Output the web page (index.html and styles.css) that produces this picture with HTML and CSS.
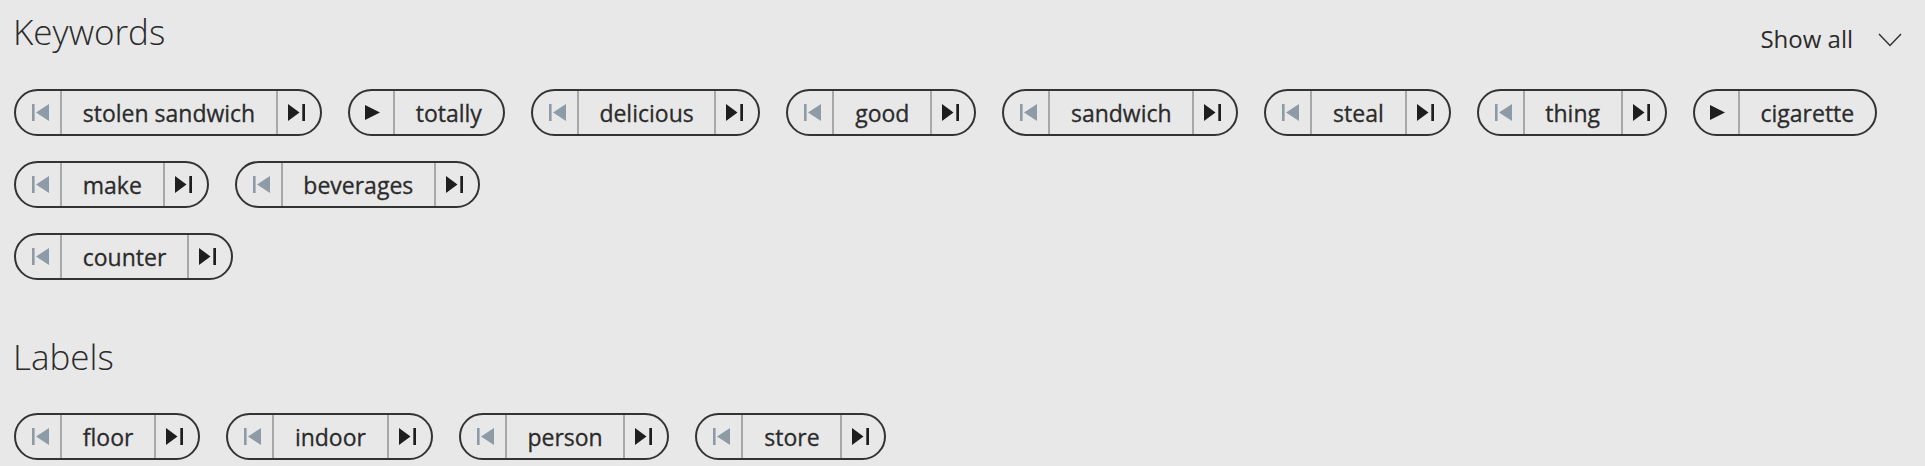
FILE: index.html
```html
<!DOCTYPE html>
<html lang="en">
<head>
<meta charset="utf-8">
<title>Keywords and Labels</title>
<link rel="stylesheet" href="styles.css">
</head>
<body>
<svg width="0" height="0" class="defs" aria-hidden="true">
  <defs>
    <symbol id="i-start" viewBox="0 0 17 17"><rect x="0" y="0" width="2.6" height="17"/><polygon points="17,0 4,8.5 17,17"/></symbol>
    <symbol id="i-end" viewBox="0 0 17 17"><polygon points="0,0 11.5,8.5 0,17"/><rect x="14.3" y="0" width="2.7" height="17"/></symbol>
    <symbol id="i-play" viewBox="0 0 15 15"><polygon points="0,0 15,7.5 0,15"/></symbol>
  </defs>
</svg>

<section class="section section-keywords">
  <header class="section-head">
    <h2 class="section-title">Keywords</h2>
    <button class="show-all" type="button">Show all
      <svg class="chev" width="24" height="14" viewBox="0 0 24 14"><polyline points="1,1 12,12.5 23,1" fill="none" stroke="#333" stroke-width="1.5"/></svg>
    </button>
  </header>
  <div class="chip-rows">
    <div class="chip-row">
      <div class="chip"><span class="btn btn-start"><svg class="ic"><use href="#i-start"/></svg></span><span class="chip-label">stolen sandwich</span><span class="btn btn-end"><svg class="ic"><use href="#i-end"/></svg></span></div>
      <div class="chip"><span class="btn btn-play"><svg class="ic-play"><use href="#i-play"/></svg></span><span class="chip-label">totally</span></div>
      <div class="chip"><span class="btn btn-start"><svg class="ic"><use href="#i-start"/></svg></span><span class="chip-label">delicious</span><span class="btn btn-end"><svg class="ic"><use href="#i-end"/></svg></span></div>
      <div class="chip"><span class="btn btn-start"><svg class="ic"><use href="#i-start"/></svg></span><span class="chip-label">good</span><span class="btn btn-end"><svg class="ic"><use href="#i-end"/></svg></span></div>
      <div class="chip"><span class="btn btn-start"><svg class="ic"><use href="#i-start"/></svg></span><span class="chip-label">sandwich</span><span class="btn btn-end"><svg class="ic"><use href="#i-end"/></svg></span></div>
      <div class="chip"><span class="btn btn-start"><svg class="ic"><use href="#i-start"/></svg></span><span class="chip-label">steal</span><span class="btn btn-end"><svg class="ic"><use href="#i-end"/></svg></span></div>
      <div class="chip"><span class="btn btn-start"><svg class="ic"><use href="#i-start"/></svg></span><span class="chip-label">thing</span><span class="btn btn-end"><svg class="ic"><use href="#i-end"/></svg></span></div>
      <div class="chip"><span class="btn btn-play"><svg class="ic-play"><use href="#i-play"/></svg></span><span class="chip-label">cigarette</span></div>
    </div>
    <div class="chip-row">
      <div class="chip"><span class="btn btn-start"><svg class="ic"><use href="#i-start"/></svg></span><span class="chip-label">make</span><span class="btn btn-end"><svg class="ic"><use href="#i-end"/></svg></span></div>
      <div class="chip"><span class="btn btn-start"><svg class="ic"><use href="#i-start"/></svg></span><span class="chip-label">beverages</span><span class="btn btn-end"><svg class="ic"><use href="#i-end"/></svg></span></div>
    </div>
    <div class="chip-row">
      <div class="chip"><span class="btn btn-start"><svg class="ic"><use href="#i-start"/></svg></span><span class="chip-label">counter</span><span class="btn btn-end"><svg class="ic"><use href="#i-end"/></svg></span></div>
    </div>
  </div>
</section>

<section class="section section-labels">
  <header class="section-head">
    <h2 class="section-title">Labels</h2>
  </header>
  <div class="chip-rows">
    <div class="chip-row">
      <div class="chip"><span class="btn btn-start"><svg class="ic"><use href="#i-start"/></svg></span><span class="chip-label">floor</span><span class="btn btn-end"><svg class="ic"><use href="#i-end"/></svg></span></div>
      <div class="chip"><span class="btn btn-start"><svg class="ic"><use href="#i-start"/></svg></span><span class="chip-label">indoor</span><span class="btn btn-end"><svg class="ic"><use href="#i-end"/></svg></span></div>
      <div class="chip"><span class="btn btn-start"><svg class="ic"><use href="#i-start"/></svg></span><span class="chip-label">person</span><span class="btn btn-end"><svg class="ic"><use href="#i-end"/></svg></span></div>
      <div class="chip"><span class="btn btn-start"><svg class="ic"><use href="#i-start"/></svg></span><span class="chip-label">store</span><span class="btn btn-end"><svg class="ic"><use href="#i-end"/></svg></span></div>
    </div>
  </div>
</section>
</body>
</html>
```

FILE: styles.css
```css
html, body {
  margin: 0;
  padding: 0;
}
body {
  background: #e8e8e8;
  color: #2b2b2b;
  font-family: "Open Sans", "Noto Sans", "Liberation Sans", sans-serif;
  padding: 10px 23px 0 14px;
  width: 1925px;
  box-sizing: border-box;
}
.defs {
  position: absolute;
  width: 0;
  height: 0;
  overflow: hidden;
}
.section-keywords {
  margin-bottom: 55px;
}
.section-head {
  display: flex;
  justify-content: space-between;
  align-items: flex-start;
  margin-bottom: 34px;
}
.section-title {
  margin: 0;
  font-size: 35px;
  font-weight: 350;
  line-height: 44px;
  color: #2b2b2b;
  margin-left: -1px;
}
.show-all {
  display: flex;
  align-items: center;
  gap: 25px;
  margin-top: 13px;
  padding: 0;
  border: 0;
  background: none;
  font-family: inherit;
  font-size: 24px;
  line-height: 32px;
  color: #2b2b2b;
}
.chev {
  display: block;
  margin-top: 2px;
}
.chip-rows {
  display: flex;
  flex-direction: column;
  gap: 25px;
}
.chip-row {
  display: flex;
  gap: 26px;
}
.chip {
  display: flex;
  align-items: stretch;
  height: 47px;
  box-sizing: border-box;
  border: 2px solid #333;
  border-radius: 24px;
  overflow: hidden;
}
.btn {
  display: flex;
  align-items: center;
}
.btn-start {
  padding: 0 11px 0 16px;
  border-right: 2px solid #a8a8a8;
  color: #8c9ba6;
}
.btn-end {
  padding: 0 15px 0 10px;
  border-left: 2px solid #a8a8a8;
  color: #1e1e1e;
}
.btn-play {
  padding: 0 13px 0 15px;
  border-right: 2px solid #a8a8a8;
  color: #1e1e1e;
}
.ic {
  width: 17px;
  height: 17px;
  fill: currentColor;
  display: block;
}
.ic-play {
  width: 15px;
  height: 15px;
  fill: currentColor;
  display: block;
}
.chip-label {
  display: flex;
  align-items: center;
  padding: 0 20.75px;
  font-size: 23px;
  font-weight: 500;
  -webkit-text-stroke: 0.3px #2b2b2b;
  color: #2b2b2b;
  white-space: nowrap;
}
```
